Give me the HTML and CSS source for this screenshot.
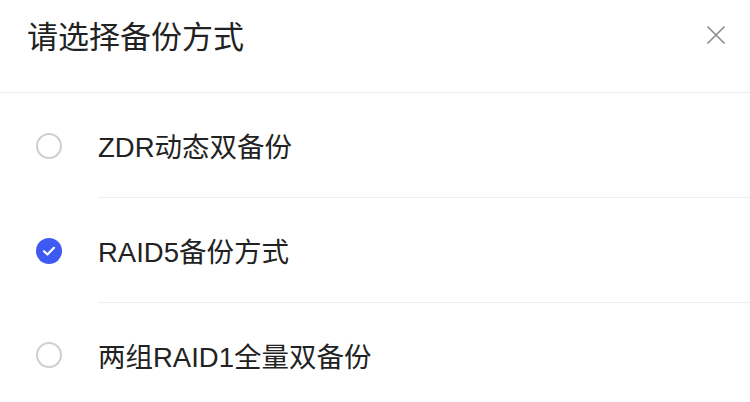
FILE: index.html
```html
<!DOCTYPE html>
<html lang="zh-CN">
<head>
<meta charset="utf-8">
<link rel="stylesheet" href="styles.css">
</head>
<body>
<div class="sheet">
  <div class="header">
    <div class="title">请选择备份方式</div>
    <button class="close" aria-label="关闭">
      <svg width="20" height="20" viewBox="0 0 20 20"><path d="M1.5 1.5 L18.5 18.5 M18.5 1.5 L1.5 18.5" stroke="#8a8a8a" stroke-width="1.6" fill="none"/></svg>
    </button>
  </div>
  <div class="options">
    <div class="option">
      <span class="radio"></span>
      <div class="label">ZDR动态双备份</div>
    </div>
    <div class="option">
      <span class="radio checked">
        <svg width="26" height="26" viewBox="0 0 26 26"><path d="M8 13.3 L11.4 16.5 L18 9.8" stroke="#fff" stroke-width="2.2" fill="none" stroke-linecap="round" stroke-linejoin="round"/></svg>
      </span>
      <div class="label">RAID5备份方式</div>
    </div>
    <div class="option">
      <span class="radio"></span>
      <div class="label">两组RAID1全量双备份</div>
    </div>
  </div>
</div>
</body>
</html>
```
FILE: styles.css
```css
html, body {
  margin: 0;
  padding: 0;
  background: #fff;
}
body {
  font-family: "Liberation Sans", "Noto Sans CJK SC", sans-serif;
  color: #222;
  width: 750px;
  height: 402px;
  overflow: hidden;
}
.sheet {
  display: flex;
  flex-direction: column;
}
.header {
  height: 93px;
  box-sizing: border-box;
  border-bottom: 1px solid #ececec;
  display: flex;
  align-items: center;
  justify-content: space-between;
  padding: 0 24px 16px 27px;
}
.title {
  font-size: 31px;
  font-weight: 400;
  line-height: 40px;
  color: #222;
}
.close {
  border: 0;
  background: none;
  padding: 0;
  width: 20px;
  height: 20px;
  display: flex;
  margin-top: -6px;
}
.options {
  display: flex;
  flex-direction: column;
}
.option {
  display: flex;
  align-items: stretch;
  padding-left: 36px;
}
.radio {
  flex: none;
  width: 26px;
  height: 26px;
  box-sizing: border-box;
  border: 2px solid #cfcfcf;
  border-radius: 50%;
  align-self: center;
  margin-right: 36px;
  display: flex;
}
.radio.checked {
  border: 0;
  background: #3f5af2;
}
.label {
  flex: 1;
  height: 104px;
  display: flex;
  align-items: center;
  font-size: 27.5px;
  border-bottom: 1px solid #eeeeee;
}
.option:last-child .label {
  border-bottom: 0;
}
```
